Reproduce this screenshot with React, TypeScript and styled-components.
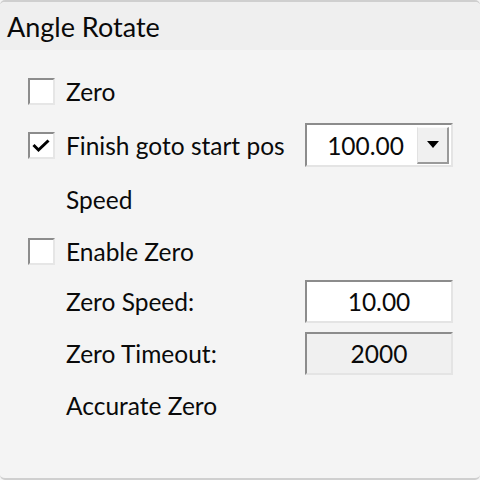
import React, { useState } from 'react';
import styled, { createGlobalStyle } from 'styled-components';

const GlobalStyle = createGlobalStyle`
  html, body {
    margin: 0;
    padding: 0;
    background: #f4f4f4;
  }
  body {
    font-family: Lato, "Noto Sans", sans-serif;
    color: #0a0a0a;
  }
`;

const Group = styled.div`
  width: 480px;
  height: 480px;
  box-sizing: border-box;
  background: #f4f4f4;
  border-top: 2px solid #cfcfcf;
  border-bottom: 2px solid #cfcfcf;
  border-radius: 5px;
  display: flex;
  flex-direction: column;
  overflow: hidden;
`;

const Header = styled.div`
  height: 48px;
  background: #efefef;
  display: flex;
  align-items: center;
  padding-left: 7px;
  font-size: 27px;
`;

const Body = styled.div`
  display: flex;
  flex-direction: column;
  padding: 15px 27px 0 28px;
`;

const Row = styled.div<{ $h: number }>`
  height: ${(p) => p.$h}px;
  display: grid;
  grid-template-columns: 1fr 148px;
  align-items: center;
`;

const Left = styled.div<{ $indent?: boolean }>`
  display: flex;
  align-items: center;
  gap: 11px;
  padding-left: ${(p) => (p.$indent ? 38 : 0)}px;
  font-size: 24.5px;
  white-space: nowrap;
`;

const Box = styled.div`
  width: 27px;
  height: 27px;
  box-sizing: border-box;
  background: #fff;
  border-top: 2px solid #8c8c8c;
  border-left: 2px solid #8c8c8c;
  border-right: 2px solid #e6e6e6;
  border-bottom: 2px solid #e6e6e6;
  display: flex;
  align-items: center;
  justify-content: center;
  cursor: pointer;
`;

const Field = styled.div<{ $disabled?: boolean; $h: number }>`
  height: ${(p) => p.$h}px;
  box-sizing: border-box;
  background: ${(p) => (p.$disabled ? '#f0f0f0' : '#fff')};
  border-top: 2px solid #8c8c8c;
  border-left: 2px solid #8c8c8c;
  border-right: 2px solid #e4e4e4;
  border-bottom: 2px solid #e4e4e4;
  display: flex;
  align-items: center;
  font-size: 24.5px;
`;

const Value = styled.span<{ $center?: boolean }>`
  flex: 1;
  text-align: ${(p) => (p.$center ? 'center' : 'right')};
  padding-right: ${(p) => (p.$center ? 0 : 13)}px;
`;

const DropButton = styled.div`
  width: 32px;
  height: 37px;
  margin-right: 2px;
  box-sizing: border-box;
  background: #f0f0f0;
  border-top: 1px solid #fafafa;
  border-left: 1px solid #e2e2e2;
  border-right: 2px solid #9a9a9a;
  border-bottom: 2px solid #9a9a9a;
  display: flex;
  align-items: center;
  justify-content: center;
`;

const Check = () => (
  <svg width="19" height="15" viewBox="0 0 19 15">
    <path d="M1.5 7 L6.5 12 L16.5 2.5" fill="none" stroke="#000" strokeWidth="3" />
  </svg>
);

const Arrow = () => (
  <svg width="12" height="7" viewBox="0 0 12 7">
    <path d="M0 0 H12 L6 7 Z" fill="#000" />
  </svg>
);

const CheckBox = ({ checked, onToggle }: { checked: boolean; onToggle: () => void }) => (
  <Box onClick={onToggle}>{checked ? <Check /> : null}</Box>
);

const App = (): JSX.Element => {
  const [zero, setZero] = useState<boolean>(false);
  const [finish, setFinish] = useState<boolean>(true);
  const [enableZero, setEnableZero] = useState<boolean>(false);

  return (
    <>
      <GlobalStyle />
      <Group>
        <Header>Angle Rotate</Header>
        <Body>
          <Row $h={53}>
            <Left>
              <CheckBox checked={zero} onToggle={() => setZero(!zero)} />
              Zero
            </Left>
          </Row>
          <Row $h={54}>
            <Left>
              <CheckBox checked={finish} onToggle={() => setFinish(!finish)} />
              Finish goto start pos
            </Left>
            <Field $h={44}>
              <Value>100.00</Value>
              <DropButton>
                <Arrow />
              </DropButton>
            </Field>
          </Row>
          <Row $h={54}>
            <Left $indent>Speed</Left>
          </Row>
          <Row $h={50}>
            <Left>
              <CheckBox checked={enableZero} onToggle={() => setEnableZero(!enableZero)} />
              Enable Zero
            </Left>
          </Row>
          <Row $h={51}>
            <Left $indent>Zero Speed:</Left>
            <Field $h={43}>
              <Value $center>10.00</Value>
            </Field>
          </Row>
          <Row $h={52}>
            <Left $indent>Zero Timeout:</Left>
            <Field $h={43} $disabled>
              <Value $center>2000</Value>
            </Field>
          </Row>
          <Row $h={52}>
            <Left $indent>Accurate Zero</Left>
          </Row>
        </Body>
      </Group>
    </>
  );
};

export default App;
